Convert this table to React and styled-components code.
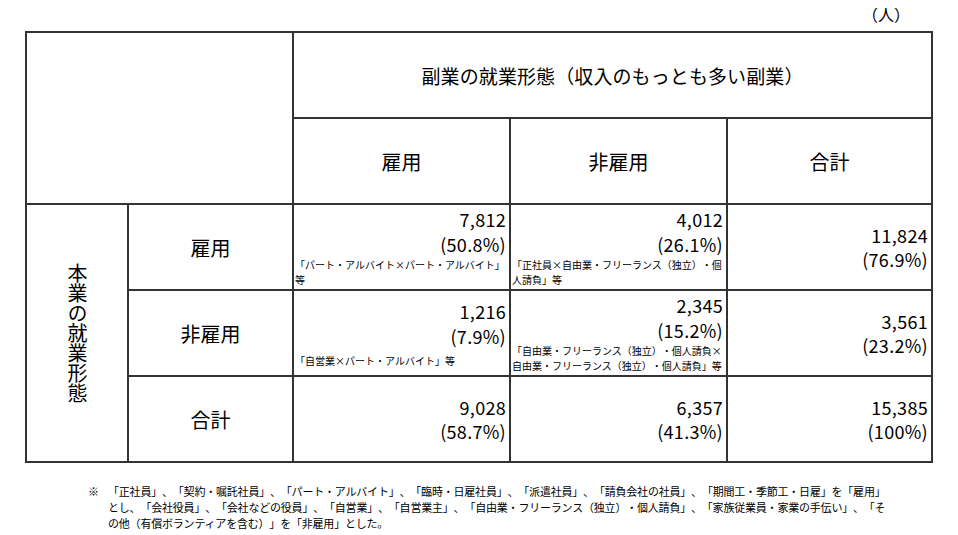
import React from 'react';
import styled, { createGlobalStyle } from 'styled-components';

const GlobalStyle = createGlobalStyle`
	html, body {
		margin: 0;
		padding: 0;
		background: #fff;
	}
	body {
		font-family: "Noto Sans CJK JP", "Noto Sans", sans-serif;
		color: #000;
		text-spacing-trim: space-all;
	}
`

const Page = styled.div`
	width: 958px;
	height: 535px;
	padding: 4px 0 0 25px;
	box-sizing: border-box;
	overflow: hidden;
`

const Unit = styled.div`
	width: 908px;
	padding-right: 23px;
	box-sizing: border-box;
	text-align: right;
	font-size: 16px;
	line-height: 20px;
	height: 27px;
`

const Grid = styled.div`
	display: grid;
	grid-template-columns: 100px 163px 215px 215px 203px;
	grid-template-rows: repeat(5, 84px);
	gap: 2px;
	padding: 2px;
	width: 908px;
	box-sizing: border-box;
	background: #333;
`

const Cell = styled.div`
	background: #fff;
	grid-column: ${p => p.$col || 'auto'};
	grid-row: ${p => p.$row || 'auto'};
	display: flex;
	align-items: center;
	justify-content: center;
`

const Heading = styled(Cell)`
	font-size: ${p => p.$size || 20}px;
	letter-spacing: ${p => p.$spacing || 0}px;
`

const Vertical = styled(Cell)`
	font-size: 20px;
	line-height: 20px;
	& > span {
		writing-mode: vertical-rl;
		text-orientation: upright;
	}
`

const DataCell = styled(Cell)`
	flex-direction: column;
	align-items: stretch;
	padding: 0 3px 0 1px;
`

const Num = styled.div`
	text-align: right;
	font-size: 18px;
	line-height: ${p => p.$lh || 25}px;
	letter-spacing: 0.3px;
`

const Note = styled.div`
	font-size: 10px;
	line-height: 15px;
	text-align: left;
	margin-top: ${p => p.$gap || 0}px;
`

const Footnote = styled.div`
	display: flex;
	margin: 20px 0 0 63px;
	font-size: 11px;
	line-height: 16px;
	letter-spacing: -0.2px;
	white-space: nowrap;
`

const Mark = styled.span`
	width: 20px;
	flex-shrink: 0;
`

const rows = [
	{
		label: '雇用',
		cells: [
			{ n: '7,812', p: '(50.8%)', note: '「パート・アルバイト×パート・アルバイト」等' },
			{ n: '4,012', p: '(26.1%)', note: '「正社員×自由業・フリーランス（独立）・個人請負」等' },
		],
		total: { n: '11,824', p: '(76.9%)' },
	},
	{
		label: '非雇用',
		cells: [
			{ n: '1,216', p: '(7.9%)', note: '「自営業×パート・アルバイト」等', gap: 4 },
			{ n: '2,345', p: '(15.2%)', note: '「自由業・フリーランス（独立）・個人請負×自由業・フリーランス（独立）・個人請負」等' },
		],
		total: { n: '3,561', p: '(23.2%)' },
	},
	{
		label: '合計',
		cells: [
			{ n: '9,028', p: '(58.7%)' },
			{ n: '6,357', p: '(41.3%)' },
		],
		total: { n: '15,385', p: '(100%)' },
	},
];

export default function App() {
	return (
		<Page>
			<GlobalStyle />
			<Unit>（人）</Unit>
			<Grid>
				<Cell $col="1 / 3" $row="1 / 3" />
				<Heading $col="3 / 6" $row="1" $size={19} $spacing={0.1}>
					副業の就業形態（収入のもっとも多い副業）
				</Heading>
				<Heading $col="3" $row="2">雇用</Heading>
				<Heading $col="4" $row="2">非雇用</Heading>
				<Heading $col="5" $row="2">合計</Heading>
				<Vertical $col="1" $row="3 / 6"><span>本業の就業形態</span></Vertical>
				{rows.map((r, i) => (
					<React.Fragment key={i}>
						<Heading $col="2" $row={i + 3}>{r.label}</Heading>
						{r.cells.map((c, j) => (
							<DataCell key={j} $col={j + 3} $row={i + 3}>
								<Num $lh={c.note ? 25 : 24}>{c.n}</Num>
								<Num $lh={c.note ? 25 : 24}>{c.p}</Num>
								{c.note && <Note $gap={c.gap}>{c.note}</Note>}
							</DataCell>
						))}
						<DataCell $col="5" $row={i + 3}>
							<Num $lh={24}>{r.total.n}</Num>
							<Num $lh={24}>{r.total.p}</Num>
						</DataCell>
					</React.Fragment>
				))}
			</Grid>
			<Footnote>
				<Mark>※</Mark>
				<div>
					「正社員」、「契約・嘱託社員」、「パート・アルバイト」、「臨時・日雇社員」、「派遣社員」、「請負会社の社員」、「期間工・季節工・日雇」を「雇用」<br />
					とし、「会社役員」、「会社などの役員」、「自営業」、「自営業主」、「自由業・フリーランス（独立）・個人請負」、「家族従業員・家業の手伝い」、「そ<br />
					の他（有償ボランティアを含む）」を「非雇用」とした。
				</div>
			</Footnote>
		</Page>
	);
}
